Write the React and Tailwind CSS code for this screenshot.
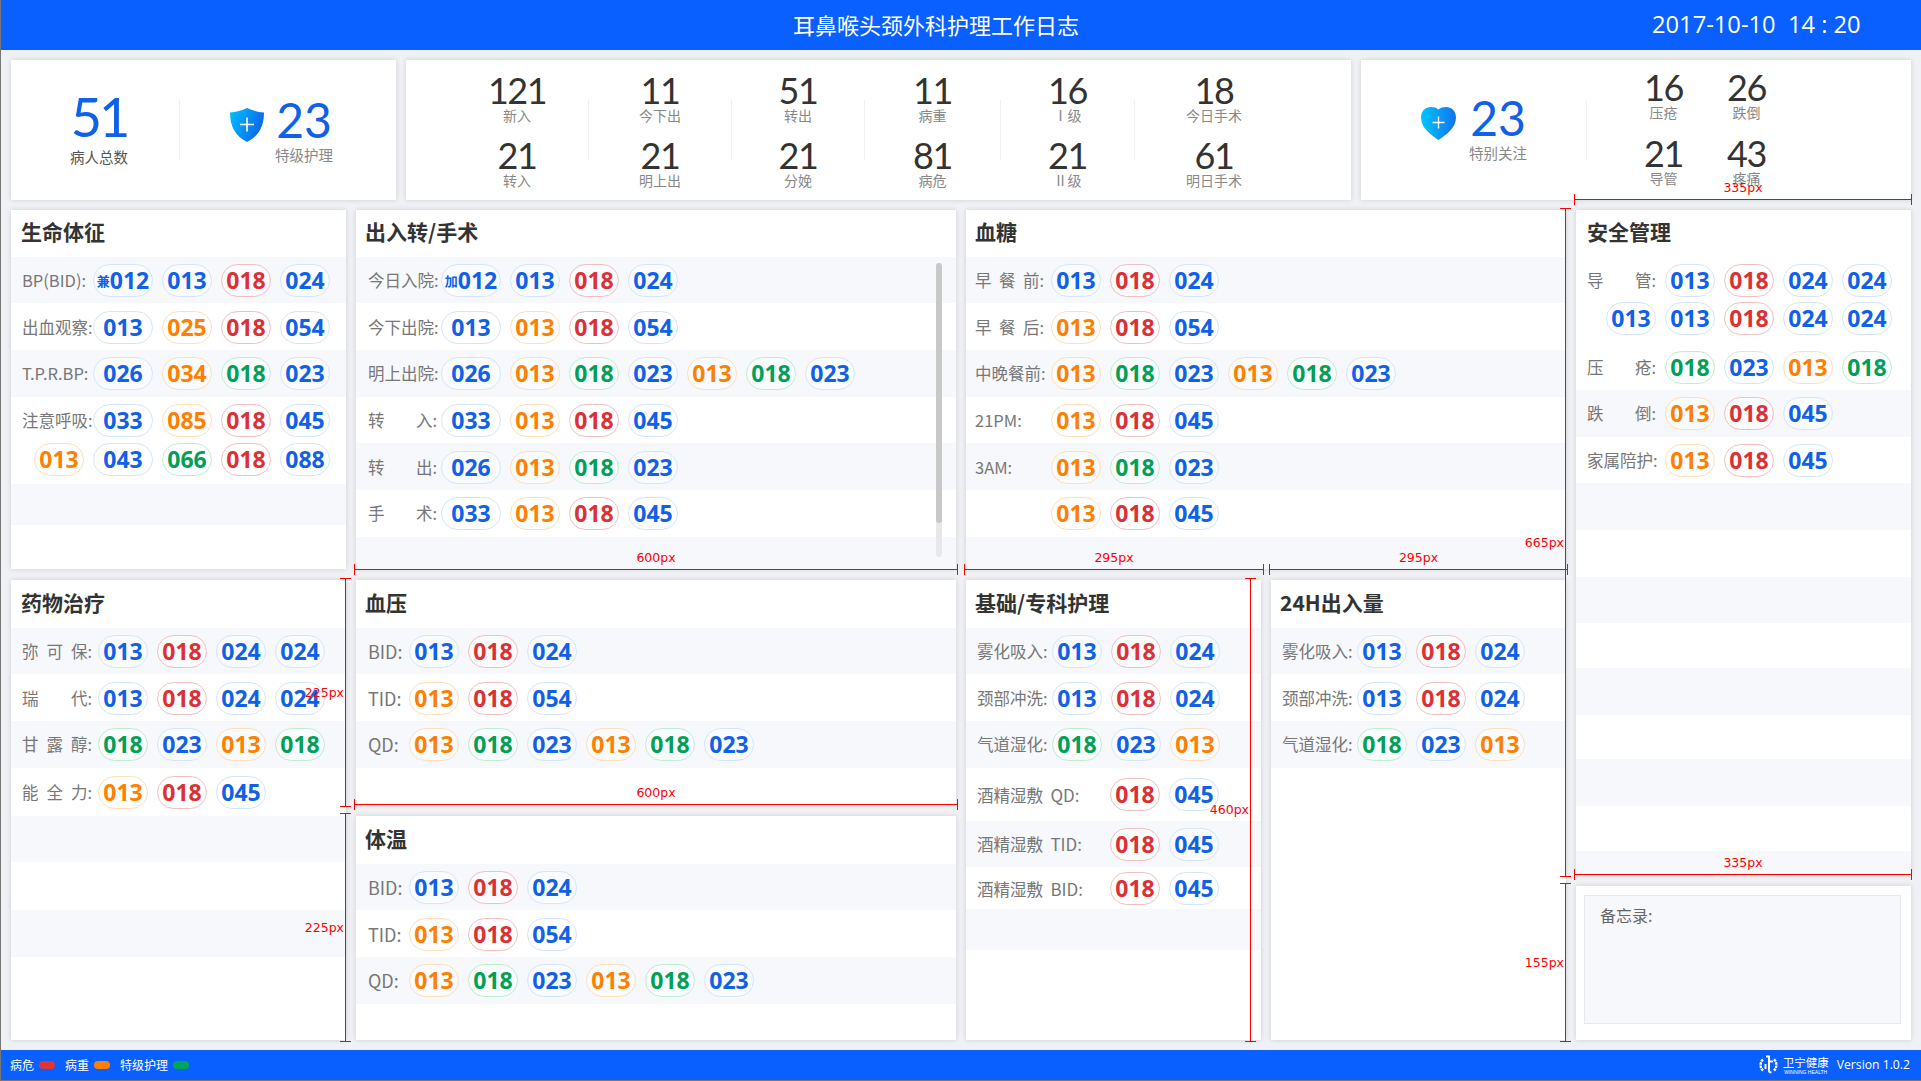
const TONES = {
  b: 'border-[#d3e5fc] text-[#1060e8]',
  r: 'border-[#f1bfc0] text-[#dc3035]',
  o: 'border-[#fddfba] text-[#ff7f00]',
  g: 'border-[#bdeed0] text-[#00a056]',
};

// "b013" => tone + number, "b012兼" => with a small prefix
function Pill({ code, wide }) {
  const tone = TONES[code[0]];
  const num = code.slice(1, 4);
  const prefix = code.slice(4);
  return (
    <div className={`flex flex-none items-center justify-center h-[33px] rounded-[16.5px] border bg-white/40 font-['Noto_Sans',sans-serif] font-bold text-[23px] leading-none ${wide ? 'w-[60px]' : 'w-[50px]'} ${tone}`}>
      {prefix && <span className="font-['Noto_Sans_CJK_SC',sans-serif] text-[13px]">{prefix}</span>}
      {num}
    </div>
  );
}

function Pills({ list, wide }) {
  return (
    <div className="flex gap-[9px]">
      {list.map((code, i) => <Pill key={i} code={code} wide={wide && i === 0} />)}
    </div>
  );
}

function Label({ text, lab }) {
  // an array means the characters are spread over the label width
  if (Array.isArray(text)) {
    return (
      <div className={`flex flex-none justify-between text-[16.5px] text-[#777] ${lab}`}>
        {text.map((t, i) => <span key={i}>{t}</span>)}
      </div>
    );
  }
  return <div className={`flex-none whitespace-pre text-[16.5px] text-[#777] ${lab}`}>{text}</div>;
}

function Row({ label, pills = [], lab, pad = 'pl-[11px]', wide, h = 'h-[46.67px]' }) {
  return (
    <div className={`flex flex-none items-center pt-px odd:bg-[#f7f8fc] ${h} ${pad}`}>
      {label !== undefined && <Label text={label} lab={lab} />}
      <Pills list={pills} wide={wide} />
    </div>
  );
}

function Card({ title, className, pad = 'pl-[10px]', titleH = 'h-[46.67px]', children }) {
  return (
    <div className={`relative flex flex-col overflow-hidden bg-white shadow-[0_0_5px_rgba(0,0,0,0.14)] ${className}`}>
      <div className={`flex flex-none items-center pb-[3px] text-[21px] font-bold text-[#333] ${titleH} ${pad}`}>{title}</div>
      <div className="flex flex-col">{children}</div>
    </div>
  );
}

function Stat({ num, label, className = '' }) {
  return (
    <div className={`flex flex-col items-center ${className}`}>
      <div className="h-[32px] font-['Lato',sans-serif] text-[36px] leading-[32px] tracking-[-1.5px] text-[#333]">{num}</div>
      <div className="h-[16px] mt-px text-[14px] leading-[16px] text-[#888]">{label}</div>
    </div>
  );
}

function StatCol({ top, bottom, className }) {
  return (
    <div className={`flex flex-none flex-col gap-[16px] pt-[2px] ${className}`}>
      <Stat {...top} />
      <Stat {...bottom} />
    </div>
  );
}

function Sep() {
  return <div className="flex-none w-px h-[60px] bg-[#eeeff2]" />;
}

function Shield() {
  return (
    <svg width="34" height="34" viewBox="0 0 34 34">
      <defs>
        <linearGradient id="sh" x1="0" y1="0" x2="1" y2="0.4">
          <stop offset="0" stopColor="#00c3ff" />
          <stop offset="1" stopColor="#0d68ea" />
        </linearGradient>
      </defs>
      <path d="M17 0C22 2.5 28 4 34 4.5C34 18 29 28 17 34C5 28 0 18 0 4.5C6 4 12 2.5 17 0Z" fill="url(#sh)" />
      <path d="M17 9.5V23.5M10 16.5H24" stroke="#fff" strokeWidth="1.6" />
    </svg>
  );
}

function Heart() {
  return (
    <svg width="35" height="33" viewBox="0 0 35 33">
      <defs>
        <linearGradient id="hr" x1="0" y1="0" x2="1" y2="0">
          <stop offset="0" stopColor="#00c6ff" />
          <stop offset="1" stopColor="#1472ee" />
        </linearGradient>
      </defs>
      <path d="M17.5 33C10 28 0 21 0 10.5C0 4 4.5 0 10 0C13 0 15.8 0.8 17.5 2.5C19.2 0.8 22 0 25 0C30.5 0 35 4 35 10.5C35 21 25 28 17.5 33Z" fill="url(#hr)" />
      <path d="M17.5 9.5V21.5M11.5 15.5H23.5" stroke="#fff" strokeWidth="1.4" />
    </svg>
  );
}

function Logo() {
  return (
    <svg width="19" height="20" viewBox="0 0 19 20" fill="none" stroke="#fff">
      <path d="M4 4.5A7.5 7.5 0 0 0 4 15.5" strokeWidth="2.4" strokeDasharray="2.6 0.7" />
      <path d="M15 4.5A7.5 7.5 0 0 1 15 15.5" strokeWidth="2.4" strokeDasharray="2.6 0.7" />
      <path d="M7 1.5H10V15.5C10 17 11 17.5 12.5 17.5" strokeWidth="2" />
      <path d="M10 6.5H14M6.5 9V14" strokeWidth="2" />
    </svg>
  );
}

function HMeasure({ className, label }) {
  return (
    <div className={`absolute h-[11px] border-x border-[#f00] ${className}`}>
      <div className="absolute top-[5px] inset-x-0 h-px bg-[#f00]" />
      <span className="absolute -top-[13px] inset-x-0 text-center font-['DejaVu_Sans',sans-serif] text-[12.5px] leading-[14px] text-[#f00]">{label}</span>
    </div>
  );
}

function VMeasure({ className, label }) {
  return (
    <div className={`absolute w-[11px] border-y border-[#f00] ${className}`}>
      <div className="absolute left-[5px] inset-y-0 w-px bg-[#f00]" />
      {label && <span className="absolute right-[7px] top-1/2 -translate-y-1/2 font-['DejaVu_Sans',sans-serif] text-[12.5px] leading-[14px] text-[#f00]">{label}</span>}
    </div>
  );
}

const L1 = 'w-[71px] pr-[2px]';
const L2 = 'w-[73px] pr-[4px]';
const L3 = 'w-[76px] pr-[7px]';
const L4 = 'w-[76px] pr-[6px]';
const L5 = 'w-[78px] pr-[9px]';
const L6 = 'w-[75px] pr-[6px]';
const L7 = 'w-[41px] text-[18px]!';
const L8 = 'w-[133px]';
const LOWER = 'h-[47.67px]';

function BpRows() {
  return (
    <>
      <Row label="BID:" lab={L7} pad="pl-[12px]" pills={['b013', 'r018', 'b024']} />
      <Row label="TID:" lab={L7} pad="pl-[12px]" pills={['o013', 'r018', 'b054']} />
      <Row label="QD:" lab={L7} pad="pl-[12px]" pills={['o013', 'g018', 'b023', 'o013', 'g018', 'b023']} />
    </>
  );
}

function CareRows() {
  return (
    <>
      <Row label="雾化吸入:" lab={L6} pills={['b013', 'r018', 'b024']} />
      <Row label="颈部冲洗:" lab={L6} pills={['b013', 'r018', 'b024']} />
      <Row label="气道湿化:" lab={L6} pills={['g018', 'b023', 'o013']} />
    </>
  );
}

export default function App() {
  return (
    <div className="relative flex flex-col w-[1921px] h-[1081px] overflow-hidden border-l border-b border-[#777] bg-[#eff1f5] font-['Noto_Sans_CJK_SC',sans-serif]">
      {/* 顶部 */}
      <div className="flex flex-none items-center h-[50px] bg-[#0a5fff] text-white">
        <div className="ml-[792px] -mt-[2px] text-[22px]">耳鼻喉头颈外科护理工作日志</div>
        <div className="ml-[573px] whitespace-pre font-['Open_Sans',sans-serif] text-[23.7px]">2017-10-10  14 : 20</div>
      </div>

      {/* 统计 */}
      <div className="flex flex-none gap-[10px] h-[140px] mt-[10px] ml-[10px]">
        <div className="flex flex-none items-center w-[385px] bg-white shadow-[0_0_5px_rgba(0,0,0,0.14)]">
          <div className="flex flex-none flex-col items-center w-[168px] pl-[8px] pt-[1px]">
            <div className="h-[45px] font-['Lato',sans-serif] text-[54px] leading-[45px] tracking-[-3px] text-[#1060e8]">51</div>
            <div className="mt-[8px] text-[14.5px] leading-[20px] text-[#555]">病人总数</div>
          </div>
          <Sep />
          <div className="flex-none ml-[50px] -mt-[10px]"><Shield /></div>
          <div className="flex flex-col items-center ml-[11px] mt-[5px]">
            <div className="h-[40px] font-['Lato',sans-serif] text-[48px] leading-[40px] text-[#1060e8]">23</div>
            <div className="mt-[5px] text-[14.5px] leading-[20px] text-[#888]">特级护理</div>
          </div>
        </div>

        <div className="flex flex-none items-center w-[945px] bg-white shadow-[0_0_5px_rgba(0,0,0,0.14)]">
          <StatCol className="w-[182px] pl-[40px]" top={{ num: '121', label: '新入' }} bottom={{ num: '21', label: '转入' }} />
          <Sep />
          <StatCol className="w-[142px]" top={{ num: '11', label: '今下出' }} bottom={{ num: '21', label: '明上出' }} />
          <Sep />
          <StatCol className="w-[132px]" top={{ num: '51', label: '转出' }} bottom={{ num: '21', label: '分娩' }} />
          <Sep />
          <StatCol className="w-[135px]" top={{ num: '11', label: '病重' }} bottom={{ num: '81', label: '病危' }} />
          <Sep />
          <StatCol className="w-[133px]" top={{ num: '16', label: 'Ⅰ级' }} bottom={{ num: '21', label: 'Ⅱ级' }} />
          <Sep />
          <StatCol className="w-[158px]" top={{ num: '18', label: '今日手术' }} bottom={{ num: '61', label: '明日手术' }} />
        </div>

        <div className="flex flex-none items-center w-[550px] bg-white shadow-[0_0_5px_rgba(0,0,0,0.14)]">
          <div className="flex-none ml-[60px] -mt-[13px]"><Heart /></div>
          <div className="flex flex-none flex-col items-center w-[60px] ml-[12px]">
            <div className="h-[40px] font-['Lato',sans-serif] text-[48px] leading-[40px] text-[#1060e8]">23</div>
            <div className="mt-[5px] text-[14.5px] leading-[20px] text-[#888]">特别关注</div>
          </div>
          <div className="flex-none w-[58px]" />
          <Sep />
          <div className="grid grid-cols-[83px_83px] gap-y-[17px] ml-[35px] -mt-[4px]">
            <Stat num="16" label="压疮" />
            <Stat num="26" label="跌倒" />
            <Stat num="21" label="导管" />
            <Stat num="43" label="疼痛" />
          </div>
        </div>
      </div>

      {/* 主体 */}
      <div className="flex flex-none gap-[10px] h-[830px] mt-[10px] ml-[10px]">
        <div className="flex flex-none flex-col gap-[11px] w-[335px]">
          <Card title="生命体征" className="h-[359px]">
            <Row label="BP(BID):" lab={L1} wide pills={['b012兼', 'b013', 'r018', 'b024']} />
            <Row label="出血观察:" lab={L1} wide pills={['b013', 'o025', 'r018', 'b054']} />
            <Row label="T.P.R.BP:" lab={L1} wide pills={['b026', 'o034', 'g018', 'b023']} />
            <div className="flex flex-none flex-col gap-[6px] h-[87px] pt-[7px] pl-[11px]">
              <div className="flex items-center">
                <Label text="注意呼吸:" lab={L1} />
                <Pills wide list={['b033', 'o085', 'r018', 'b045']} />
              </div>
              <div className="flex gap-[9px] pl-[12px]">
                <Pill code="o013" />
                <Pills wide list={['b043', 'g066', 'r018', 'b088']} />
              </div>
            </div>
            <Row h="h-[41px]" />
            <Row h="h-[44px]" />
          </Card>

          <Card title="药物治疗" className="flex-1" titleH={LOWER}>
            <Row label={['弥', '可', '保:']} lab={L4} pills={['b013', 'r018', 'b024', 'b024']} />
            <Row label={['瑞', '代:']} lab={L4} pills={['b013', 'r018', 'b024', 'b024']} />
            <Row label={['甘', '露', '醇:']} lab={L4} pills={['g018', 'b023', 'o013', 'g018']} />
            <Row label={['能', '全', '力:']} lab={L4} h="h-[48px]" pills={['o013', 'r018', 'b045']} />
            <Row h="h-[46px]" />
            <Row h="h-[48px]" />
            <Row h="h-[47px]" />
          </Card>
        </div>

        <div className="flex flex-none flex-col gap-[11px] w-[600px]">
          <Card title="出入转/手术" className="h-[359px]" pad="pl-[9px]">
            <Row label="今日入院:" lab={L2} pad="pl-[12px]" wide pills={['b012加', 'b013', 'r018', 'b024']} />
            <Row label="今下出院:" lab={L2} pad="pl-[12px]" wide pills={['b013', 'o013', 'r018', 'b054']} />
            <Row label="明上出院:" lab={L2} pad="pl-[12px]" wide pills={['b026', 'o013', 'g018', 'b023', 'o013', 'g018', 'b023']} />
            <Row label={['转', '入:']} lab={L2} pad="pl-[12px]" wide pills={['b033', 'o013', 'r018', 'b045']} />
            <Row label={['转', '出:']} lab={L2} pad="pl-[12px]" wide pills={['b026', 'o013', 'g018', 'b023']} />
            <Row label={['手', '术:']} lab={L2} pad="pl-[12px]" wide pills={['b033', 'o013', 'r018', 'b045']} />
            <Row h="h-[33px]" />
            <div className="absolute left-[580px] top-[53px] w-[6px] h-[294px] rounded-[3px] bg-[#e8e8e8]">
              <div className="w-[6px] h-[260px] rounded-[3px] bg-[#c8c8c8]" />
            </div>
          </Card>
          <Card title="血压" className="h-[225px]" pad="pl-[9px]" titleH={LOWER}><BpRows /></Card>
          <Card title="体温" className="flex-1" pad="pl-[9px]" titleH={LOWER}><BpRows /></Card>
        </div>

        <div className="flex flex-none flex-col gap-[11px] w-[600px]">
          <Card title="血糖" className="h-[359px]" pad="pl-[9px]">
            <Row label={['早', '餐', '前:']} lab={L3} pad="pl-[9px]" pills={['b013', 'r018', 'b024']} />
            <Row label={['早', '餐', '后:']} lab={L3} pad="pl-[9px]" pills={['o013', 'r018', 'b054']} />
            <Row label="中晚餐前:" lab={L3} pad="pl-[9px]" pills={['o013', 'g018', 'b023', 'o013', 'g018', 'b023']} />
            <Row label="21PM:" lab={L3} pad="pl-[9px]" pills={['o013', 'r018', 'b045']} />
            <Row label="3AM:" lab={L3} pad="pl-[9px]" pills={['o013', 'g018', 'b023']} />
            <Row label="" lab={L3} pad="pl-[9px]" pills={['o013', 'r018', 'b045']} />
            <Row h="h-[33px]" />
          </Card>
          <div className="flex flex-1 gap-[10px]">
            <Card title="基础/专科护理" className="w-[295px]" pad="pl-[9px]" titleH={LOWER}>
              <CareRows />
              <Row label={<>酒精湿敷  <span className="text-[17px]">QD:</span></>} lab={L8} h="h-[53px]" pills={['r018', 'b045']} />
              <Row label={<>酒精湿敷  <span className="text-[17px]">TID:</span></>} lab={L8} h="h-[46.3px]" pills={['r018', 'b045']} />
              <Row label={<>酒精湿敷  <span className="text-[17px]">BID:</span></>} lab={L8} h="h-[42px]" pills={['r018', 'b045']} />
              <Row h="h-[41px]" />
            </Card>
            <Card title="24H出入量" className="w-[295px]" pad="pl-[9px]" titleH={LOWER}><CareRows /></Card>
          </div>
        </div>

        <div className="flex flex-none flex-col gap-[11px] w-[335px]">
          <Card title="安全管理" className="h-[665px]" pad="pl-[11px]">
            <div className="flex flex-none flex-col gap-[5px] h-[86.67px] pt-[7px] pl-[11px]">
              <div className="flex items-center">
                <Label text={['导', '管:']} lab={L5} />
                <Pills list={['b013', 'r018', 'b024', 'b024']} />
              </div>
              <div className="pl-[19px]">
                <Pills list={['b013', 'b013', 'r018', 'b024', 'b024']} />
              </div>
            </div>
            <Row label={['压', '疮:']} lab={L5} pills={['g018', 'b023', 'o013', 'g018']} />
            <Row label={['跌', '倒:']} lab={L5} pills={['o013', 'r018', 'b045']} />
            <Row label="家属陪护:" lab={L5} pills={['o013', 'r018', 'b045']} />
            <Row />
            <Row />
            <Row />
            <Row h="h-[45px]" />
            <Row h="h-[47px]" />
            <Row h="h-[44px]" />
            <Row h="h-[47px]" />
            <Row h="h-[45px]" />
            <Row h="h-[24px]" />
          </Card>
          <div className="flex-1 pt-[9px] pr-[10px] pb-[16px] pl-[8px] bg-white shadow-[0_0_5px_rgba(0,0,0,0.14)]">
            <div className="h-full pt-[7px] pl-[15px] border border-[#e8e9ed] bg-[#f7f8fc] text-[16px] text-[#666]">备忘录:</div>
          </div>
        </div>
      </div>

      {/* 底部 */}
      <div className="flex flex-none items-center h-[30px] mt-[10px] pl-[9px] bg-[#0a5fff] text-[12px] text-white">
        <span>病危</span>
        <span className="w-[16px] h-[8px] ml-[5px] rounded-[4px] bg-[#e03535]" />
        <span className="ml-[10px]">病重</span>
        <span className="w-[16px] h-[8px] ml-[5px] rounded-[4px] bg-[#ff8000]" />
        <span className="ml-[10px]">特级护理</span>
        <span className="w-[16px] h-[8px] ml-[5px] rounded-[4px] bg-[#00a65a]" />
        <div className="flex items-center ml-auto">
          <Logo />
          <div className="flex flex-col items-center ml-[5px]">
            <span className="text-[11.5px] leading-[13px]">卫宁健康</span>
            <span className="font-['Liberation_Sans',sans-serif] text-[5px] leading-[6px]">WINNING HEALTH</span>
          </div>
          <span className="ml-[8px] mr-[11px] font-['Open_Sans',sans-serif] text-[12.2px]">Version 1.0.2</span>
        </div>
      </div>

      {/* 尺寸标注 */}
      <HMeasure className="left-[1573px] top-[194px] w-[338px]" label="335px" />
      <HMeasure className="left-[353px] top-[564px] w-[604px]" label="600px" />
      <HMeasure className="left-[963px] top-[564px] w-[300px]" label="295px" />
      <HMeasure className="left-[1268px] top-[564px] w-[299px]" label="295px" />
      <HMeasure className="left-[353px] top-[799px] w-[604px]" label="600px" />
      <HMeasure className="left-[1573px] top-[869px] w-[338px]" label="335px" />
      <VMeasure className="left-[339px] top-[578px] h-[229px]" label="225px" />
      <VMeasure className="left-[339px] top-[813px] h-[229px]" label="225px" />
      <VMeasure className="left-[1244px] top-[578px] h-[464px]" label="460px" />
      <VMeasure className="left-[1559px] top-[208px] h-[669px]" label="665px" />
      <VMeasure className="left-[1559px] top-[883px] h-[159px]" label="155px" />
    </div>
  );
}
